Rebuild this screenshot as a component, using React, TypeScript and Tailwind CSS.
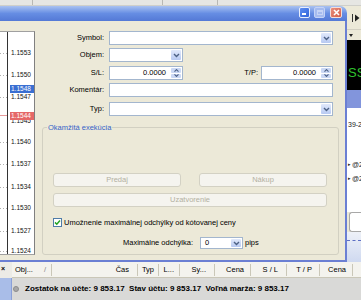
import React from "react";

const F = { fontFamily: '"Liberation Sans", Arial, sans-serif' };

function Chevron() {
  return (
    <svg width="7" height="5" viewBox="0 0 7 5">
      <path d="M1 1 L3.5 3.5 L6 1" fill="none" stroke="#4d6185" strokeWidth="1.4" />
    </svg>
  );
}

function DropBtn() {
  return (
    <div className="w-[10px] h-full bg-gradient-to-b from-[#e1e9fb] to-[#b7c9f2] rounded-[1px] flex items-center justify-center">
      <Chevron />
    </div>
  );
}

function Combo({ w, value }: { w: string; value?: string }) {
  return (
    <div className={`h-[14px] ${w} bg-white border border-[#a3b6ce] flex items-stretch p-[1px]`}>
      <div className="flex-1 flex items-center pl-[3px]">{value}</div>
      <DropBtn />
    </div>
  );
}

function SpinBox({ w }: { w: string }) {
  return (
    <div className={`h-[14px] ${w} bg-white border border-[#a3b6ce] flex items-stretch p-[1px]`}>
      <div className="flex-1 flex items-center justify-end pr-[5px]">0.0000</div>
      <div className="w-[10px] flex flex-col gap-[1px]">
        <div className="flex-1 bg-[#cad8f5] rounded-[1px] flex items-center justify-center">
          <svg width="5" height="3" viewBox="0 0 5 3">
            <path d="M0.5 2.6 L2.5 0.6 L4.5 2.6" fill="none" stroke="#4d6185" strokeWidth="1.1" />
          </svg>
        </div>
        <div className="flex-1 bg-[#cad8f5] rounded-[1px] flex items-center justify-center">
          <svg width="5" height="3" viewBox="0 0 5 3">
            <path d="M0.5 0.4 L2.5 2.4 L4.5 0.4" fill="none" stroke="#4d6185" strokeWidth="1.1" />
          </svg>
        </div>
      </div>
    </div>
  );
}

function Label({ children }: { children: React.ReactNode }) {
  return <div className="w-[69px] text-right mr-[5px] shrink-0">{children}</div>;
}

function DisabledBtn({ children, className }: { children: React.ReactNode; className?: string }) {
  return (
    <div
      className={`h-[14px] bg-[#f5f4ef] border border-[#d3d1c4] rounded-[3px] flex items-center justify-center text-[#b3b0a2] ${className ?? ""}`}
    >
      {children}
    </div>
  );
}

const axisLabels: [string, number][] = [
  ["1.1553", 21],
  ["1.1550", 43],
  ["1.1547", 65],
  ["1.1540", 110],
  ["1.1537", 132],
  ["1.1534", 155],
  ["1.1530", 176],
  ["1.1527", 199],
  ["1.1524", 219],
];

function Chart() {
  return (
    <div className="w-[35px] shrink-0 pt-[10px] pb-[5px]">
      <div className="relative h-full bg-white border-y border-[#a0a0a0] border-r border-r-[#808080]">
        <svg className="absolute left-0 top-0" width="8" height="222">
          {axisLabels.map(([, y]) => (
            <line key={y} x1="0" x2="7" y1={y + 0.5} y2={y + 0.5} stroke="#b0b0b0" strokeDasharray="1 2" />
          ))}
          <line x1="0" x2="7" y1="83.5" y2="83.5" stroke="#e79a9a" />
        </svg>
        <div className="absolute left-[7px] top-0 bottom-0 w-px bg-[#333]" />
        {axisLabels.map(([t, y]) => (
          <div key={t} className="absolute left-[11px] h-[8px] leading-[8px] text-[6.5px] text-[#111]" style={{ top: y - 4 }}>
            {t}
          </div>
        ))}
        <div className="absolute left-[11px] top-[88px] h-[4px] overflow-hidden leading-[4px] text-[6.5px] text-[#111]">
          <div className="-mt-[3px] leading-[8px]">1.1545</div>
        </div>
        <div className="absolute left-[10px] w-[24px] top-[53px] h-[8px] leading-[8px] bg-[#3a6fd2] text-white text-[6.5px] pl-[1px]">
          1.1548
        </div>
        <div className="absolute left-[10px] w-[24px] top-[80px] h-[8px] leading-[8px] bg-[#e56868] text-white text-[6.5px] pl-[1px]">
          1.1544
        </div>
      </div>
    </div>
  );
}

function Form() {
  return (
    <div className="w-[310px] pt-[10px] flex flex-col">
      <div className="flex items-center h-[14px]">
        <Label>Symbol:</Label>
        <Combo w="w-[224px]" />
      </div>
      <div className="flex items-center h-[14px] mt-[3px]">
        <Label>Objem:</Label>
        <Combo w="w-[74px]" />
      </div>
      <div className="flex items-center h-[14px] mt-[4px]">
        <Label>S/L:</Label>
        <SpinBox w="w-[74px]" />
        <div className="w-[78px] text-right pr-[3px]">T/P:</div>
        <SpinBox w="w-[72px]" />
      </div>
      <div className="flex items-center h-[14px] mt-[3px]">
        <Label>Komentár:</Label>
        <div className="h-[14px] w-[224px] bg-white border border-[#a3b6ce]" />
      </div>
      <div className="flex items-center h-[14px] mt-[5px]">
        <Label>Typ:</Label>
        <Combo w="w-[224px]" />
      </div>

      <div className="relative mt-[11px] ml-[7px] w-[297px] h-[128px] border border-[#d2d0c2] rounded-[3px] pt-[45px] pl-[10px] pr-[11px]">
        <div className="absolute left-[4px] top-[-5px] px-[1px] leading-[9px] bg-[#ece9d8] text-[#3563c8]">
          Okamžitá exekúcia
        </div>
        <div className="grid grid-cols-2 gap-[18px]">
          <DisabledBtn>Predaj</DisabledBtn>
          <DisabledBtn>Nákup</DisabledBtn>
        </div>
        <DisabledBtn className="mt-[6px]">Uzatvorenie</DisabledBtn>
        <div className="flex items-center h-[9px] mt-[11px]">
          <div className="w-[9px] h-[9px] bg-white border border-[#4f7ca8] flex items-center justify-center">
            <svg width="7" height="7" viewBox="0 0 7 7">
              <path d="M1 3.4 L2.8 5.2 L6 1.6" fill="none" stroke="#22a322" strokeWidth="1.5" />
            </svg>
          </div>
          <div className="ml-[2px]">Umožnenie maximálnej odchýlky od kótovanej ceny</div>
        </div>
        <div className="flex items-center h-[12px] mt-[10px]">
          <div className="ml-[67px] w-[73px] text-right">Maximálne odchýlka:</div>
          <div className="ml-[7px] h-[12px] w-[43px] bg-white border border-[#a3b6ce] flex items-stretch p-[1px]">
            <div className="flex-1 flex items-center pl-[3px]">0</div>
            <DropBtn />
          </div>
          <div className="ml-[2px]">pips</div>
        </div>
      </div>
    </div>
  );
}

function TitleBar() {
  return (
    <div className="h-[15px] shrink-0 rounded-tr-[7px] bg-gradient-to-b from-[#a9c1f1] via-[#668de3] to-[#5479d6] flex items-start justify-end pt-[1px] pr-[5px]">
      <div className="w-[11px] h-[11px] rounded-[2px] border border-[#e8eefc] bg-gradient-to-br from-[#5e8ef2] to-[#3264da] flex items-end pl-[2px] pb-[2px]">
        <div className="w-[4px] h-[2px] bg-white" />
      </div>
      <div className="ml-[4px] w-[11px] h-[11px] rounded-[2px] border border-[#c4d3f7] bg-[#a5bbef] flex items-center justify-center">
        <div className="w-[6px] h-[5px] border border-[#c6d4f6] border-t-2" />
      </div>
      <div className="ml-[5px] w-[12px] h-[11px] rounded-[2px] border border-[#f4ddd8] bg-gradient-to-br from-[#e98d7c] to-[#d2604b] flex items-center justify-center">
        <svg width="7" height="7" viewBox="0 0 7 7">
          <path d="M1 1 L6 6 M6 1 L1 6" stroke="white" strokeWidth="1.6" />
        </svg>
      </div>
    </div>
  );
}

function RightStrip() {
  return (
    <div className="w-[14px] shrink-0 flex flex-col overflow-hidden">
      <div className="h-[24px] bg-[#ece9d8] border-b border-[#d3d0c2] flex items-center pl-[5px] gap-[1px]">
        <div className="w-px h-[8px] bg-[#333]" />
        <svg width="6" height="8" viewBox="0 0 6 8">
          <path d="M1 0.5 L5.5 4 L1 7.5 Z" fill="#222" />
        </svg>
      </div>
      <div className="h-[10px] bg-[#ece9d8] flex items-center pl-[2px]">
        <svg width="4" height="3" viewBox="0 0 4 3">
          <path d="M0 0 L4 0 L2 3 Z" fill="#222" />
        </svg>
      </div>
      <div className="h-[50px] bg-black text-[#2fc22f] text-[13px] leading-none pt-[26px] pl-[1px] whitespace-nowrap">
        SS
      </div>
      <div className="h-[18px] bg-[#8295dc]" />
      <div className="h-[104px] bg-white text-[7px] text-[#222] flex flex-col pl-[1px] whitespace-nowrap">
        <div className="mt-[13px]">39-2</div>
        <div className="mt-[33px] flex items-center">
          <span className="text-[5px] mr-[1px]">▸</span>@2
        </div>
        <div className="mt-[7px] flex items-center">
          <span className="text-[5px] mr-[1px]">▸</span>@2
        </div>
      </div>
      <div className="h-[20px] bg-white border border-r-0 border-[#a8a8a8] rounded-l-[3px] ml-[2px]" />
      <div className="flex-1 bg-gradient-to-b from-[#eef1f8] to-[#cfd9f0] pt-[8px]">
        <div className="border-t border-dashed border-[#5d6fc4]" />
      </div>
    </div>
  );
}

function Terminal() {
  const cols: { w: string; label: string; cls: string }[] = [
    { w: "w-[86px]", label: "Čas", cls: "justify-end pr-[8px]" },
    { w: "w-[21px]", label: "Typ", cls: "justify-end pr-[4px]" },
    { w: "w-[21px]", label: "L...", cls: "justify-end pr-[5px]" },
    { w: "w-[35px]", label: "Sy...", cls: "justify-end pr-[8px]" },
    { w: "w-[36px]", label: "Cena", cls: "justify-end pr-[6px]" },
    { w: "w-[36px]", label: "S / L", cls: "justify-end pr-[8px]" },
    { w: "w-[33px]", label: "T / P", cls: "justify-end pr-[7px]" },
    { w: "w-[33px]", label: "Cena", cls: "justify-end pr-[6px]" },
  ];
  return (
    <div className="flex-1 flex">
      <div className="w-[12px] shrink-0 flex flex-col">
        <div className="h-[16px] bg-[#ecebe6] text-[7px] leading-none pt-[3px] pl-[1px] font-bold">×</div>
        <div className="flex-1 bg-[#a9bde8] border-r border-[#8aa0d8]" />
      </div>
      <div className="flex-1 flex flex-col">
        <div className="h-[16px] flex items-center bg-[#f4f3ee] border-b border-[#cac7b8] whitespace-nowrap">
          <div className="w-[40px] h-[12px] flex items-center justify-between pl-[3px] pr-[5px] border-r border-[#cac7b8]">
            <span>Obj...</span>
            <span className="text-[#888]">/</span>
          </div>
          {cols.map((c, i) => (
            <div key={i} className={`${c.w} h-[12px] flex items-center border-r border-[#cac7b8] ${c.cls}`}>
              {c.label}
            </div>
          ))}
        </div>
        <div className="flex-1 bg-[#d9d9d7] flex items-center font-bold text-[8px] whitespace-nowrap">
          <div className="ml-[1px] w-[6px] h-[6px] rounded-full bg-[#a8a8a8] border border-[#8c8c8c]" />
          <div className="ml-[6px]">Zostatok na účte: 9 853.17&nbsp; Stav účtu: 9 853.17&nbsp; Voľná marža: 9 853.17</div>
        </div>
      </div>
    </div>
  );
}

export default function App() {
  return (
    <div className="w-[361px] h-[300px] overflow-hidden flex flex-col bg-[#ece9d8] text-[7.5px] leading-none text-black" style={F}>
      <div className="h-[6px] shrink-0 bg-[#e6e6e3] border-b border-[#cfcfca] flex">
        <div className="w-[33px] border-r border-[#b8b8b4]" />
        <div className="w-[130px] border-r border-[#b8b8b4]" />
        <div className="w-[55px] border-r border-[#b8b8b4]" />
      </div>
      <div className="flex h-[256px] shrink-0">
        <div className="w-[347px] shrink-0 flex flex-col">
          <TitleBar />
          <div className="flex-1 flex border-r-2 border-b-2 border-[#6b7fd3] bg-[#ece9d8]">
            <Chart />
            <Form />
          </div>
        </div>
        <RightStrip />
      </div>
      <Terminal />
    </div>
  );
}
